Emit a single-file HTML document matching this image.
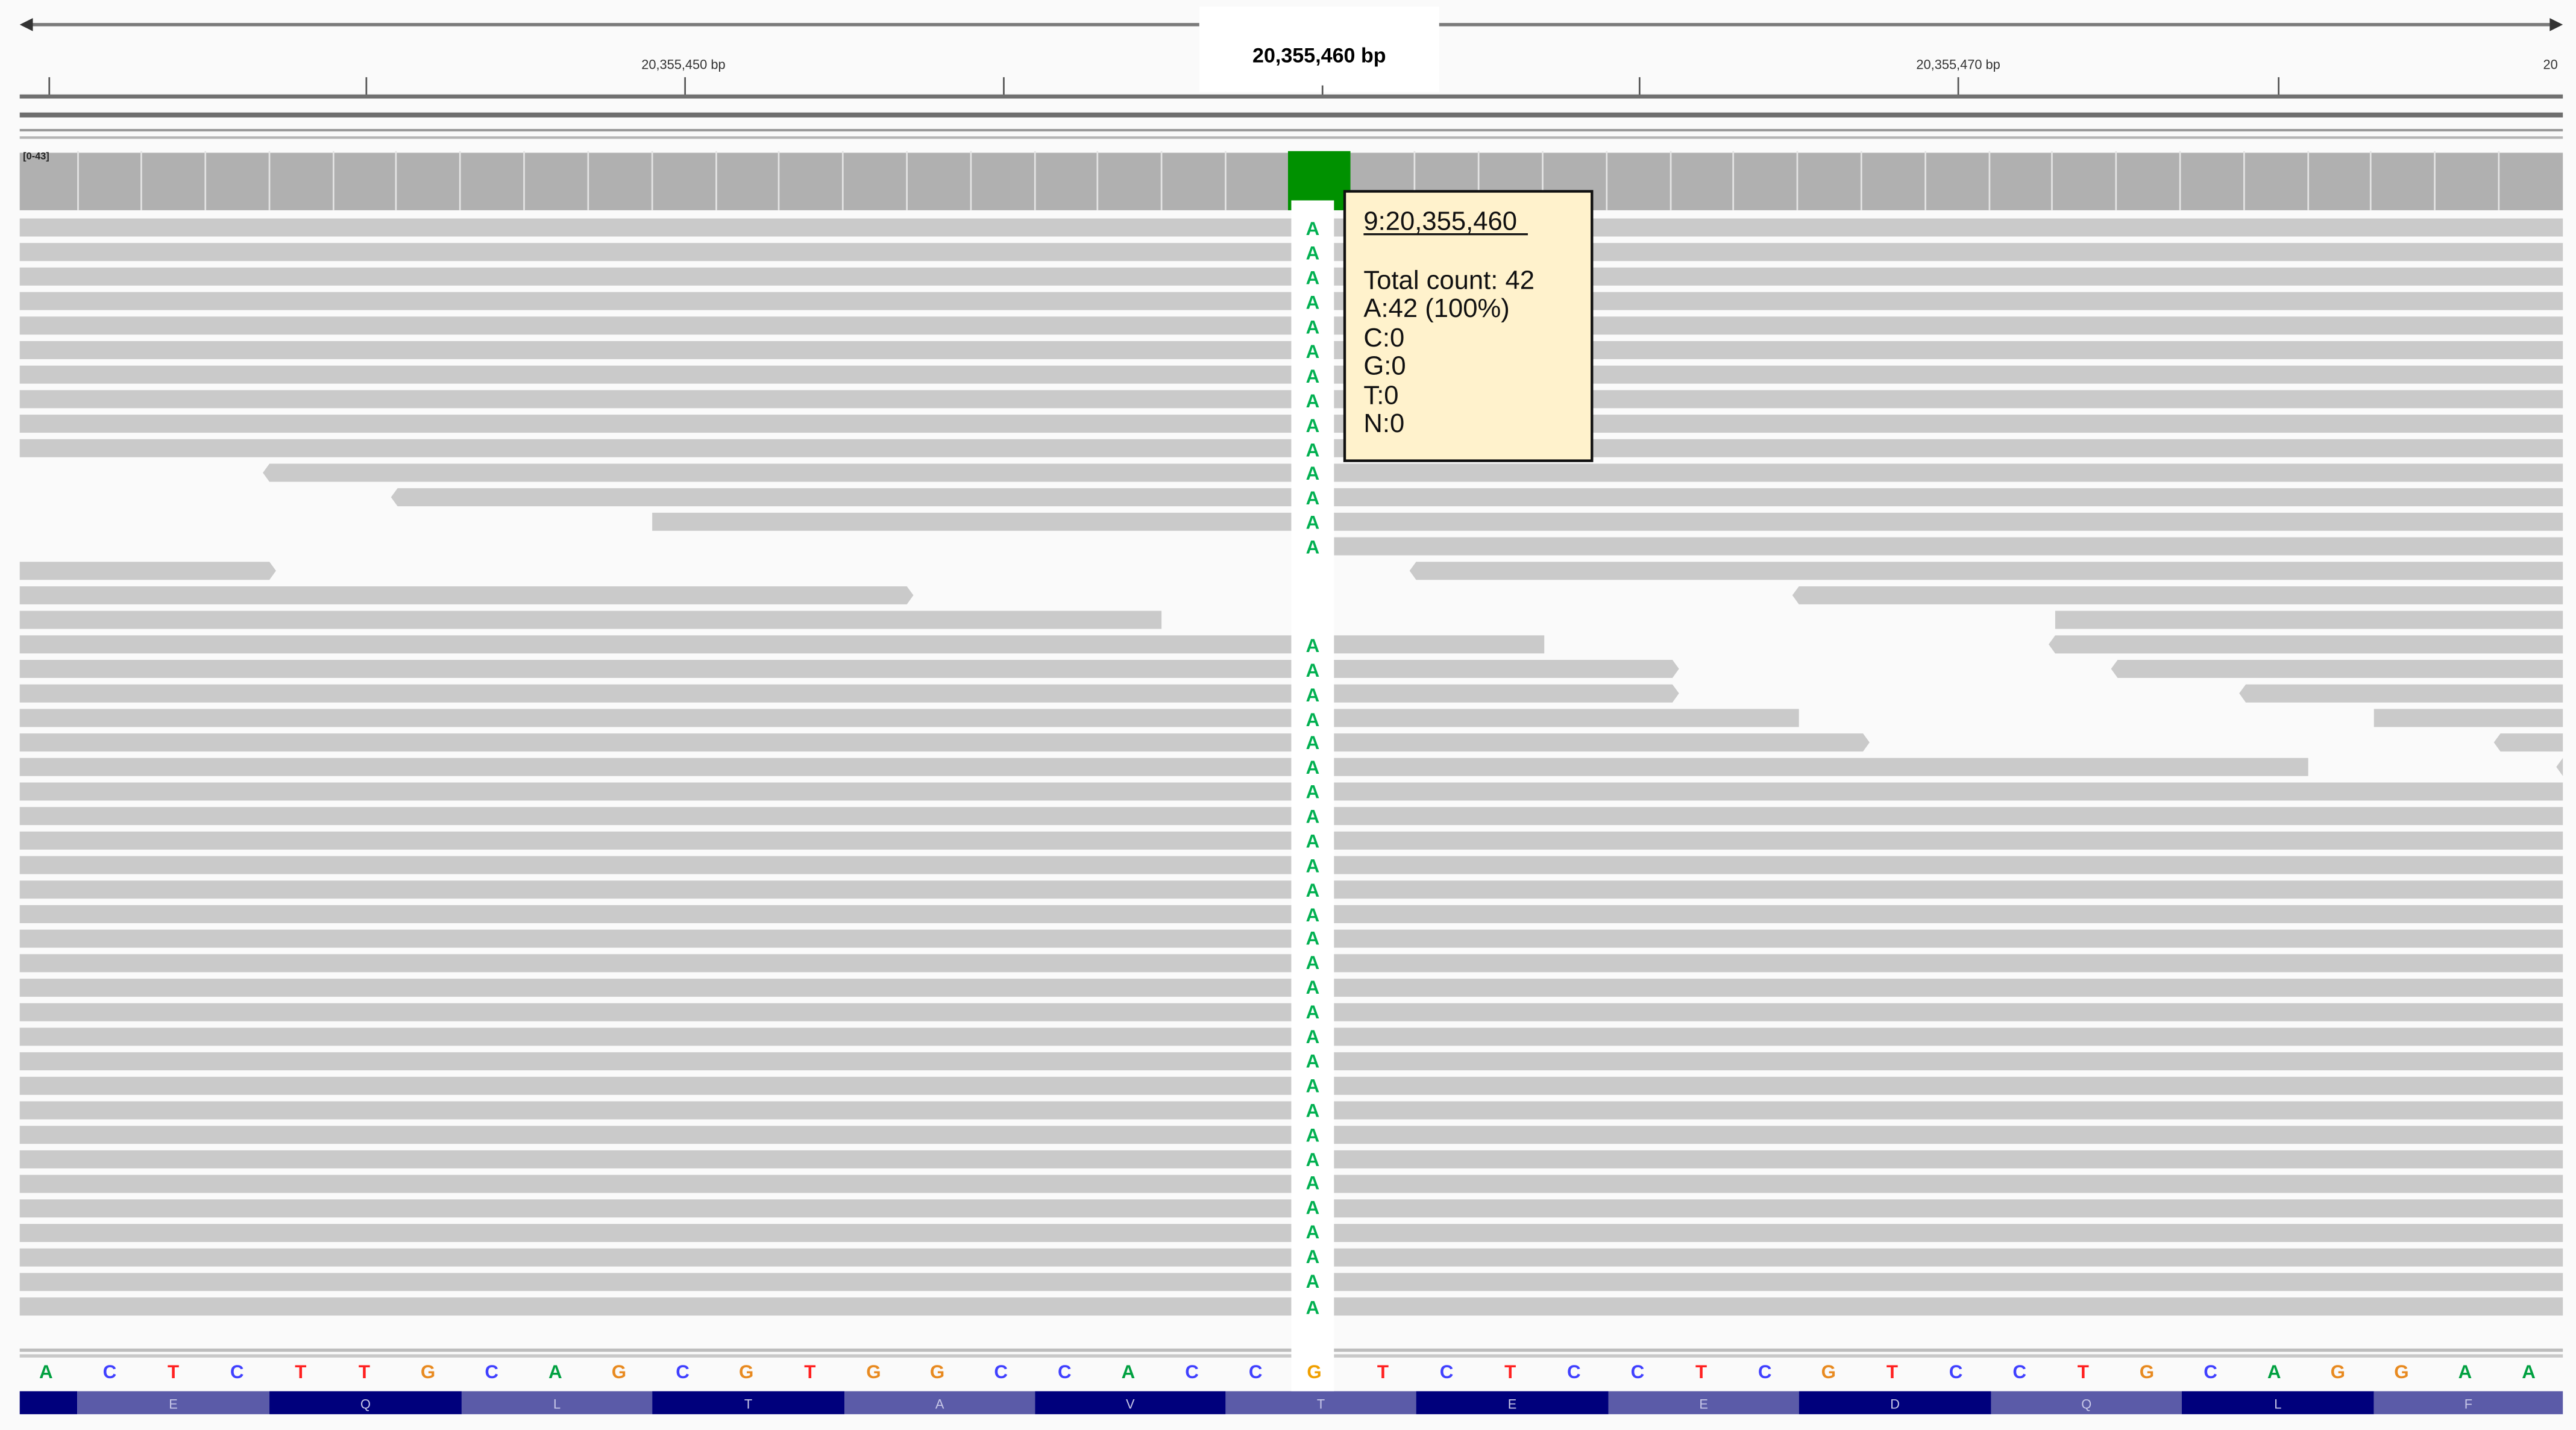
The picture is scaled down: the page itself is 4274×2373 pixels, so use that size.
<!DOCTYPE html>
<html><head><meta charset="utf-8"><style>
html,body{margin:0;padding:0;background:#fafafa;overflow:hidden}
svg{display:block}
text{font-family:"Liberation Sans",sans-serif}
</style></head><body>
<svg width="4274" height="2373" viewBox="0 0 1568 870.6" preserveAspectRatio="none" xmlns="http://www.w3.org/2000/svg">
<rect width="1568" height="871" fill="#fafafa"/>
<!-- top arrow line -->
<line x1="16" y1="15" x2="1552" y2="15" stroke="#7a7a7a" stroke-width="2"/>
<polygon points="12,15 20,11 20,19" fill="#333"/>
<polygon points="1560,15 1552,11 1552,19" fill="#333"/>
<rect x="730" y="4" width="146" height="52" fill="#fff"/>
<text x="803" y="38" font-size="12.5" font-weight="bold" text-anchor="middle" fill="#000">20,355,460 bp</text>
<text x="416" y="42" font-size="8" text-anchor="middle" fill="#333">20,355,450 bp</text>
<text x="1192" y="42" font-size="8" text-anchor="middle" fill="#333">20,355,470 bp</text>
<text x="1548" y="42" font-size="8" fill="#333">20</text>
<!-- ticks -->
<g stroke="#555" stroke-width="1">
<line x1="30" y1="47" x2="30" y2="58"/><line x1="223" y1="47" x2="223" y2="58"/><line x1="417" y1="47" x2="417" y2="58"/><line x1="611" y1="47" x2="611" y2="58"/><line x1="805" y1="52" x2="805" y2="58"/><line x1="998" y1="47" x2="998" y2="58"/><line x1="1192" y1="47" x2="1192" y2="58"/><line x1="1387" y1="47" x2="1387" y2="58"/>
</g>
<rect x="12" y="57.5" width="1548" height="2.5" fill="#707070"/>
<rect x="12" y="68.5" width="1548" height="3" fill="#6e6e6e"/>
<rect x="12" y="78.5" width="1548" height="1.5" fill="#9a9a9a"/>
<rect x="12" y="83" width="1548" height="1.5" fill="#b5b5b5"/>
<!-- coverage -->
<g fill="#b0b0b0">
<rect x="12" y="93" width="1548" height="35"/>
</g>
<g stroke="#e4e4e4" stroke-width="1">
<line x1="47.5" y1="92" x2="47.5" y2="128"/><line x1="86" y1="92" x2="86" y2="128"/><line x1="125" y1="92" x2="125" y2="128"/><line x1="164" y1="92" x2="164" y2="128"/><line x1="203" y1="92" x2="203" y2="128"/><line x1="241" y1="92" x2="241" y2="128"/><line x1="280" y1="92" x2="280" y2="128"/><line x1="319" y1="92" x2="319" y2="128"/><line x1="358" y1="92" x2="358" y2="128"/><line x1="397" y1="92" x2="397" y2="128"/><line x1="436" y1="92" x2="436" y2="128"/><line x1="474" y1="92" x2="474" y2="128"/><line x1="513" y1="92" x2="513" y2="128"/><line x1="552" y1="92" x2="552" y2="128"/><line x1="591" y1="92" x2="591" y2="128"/><line x1="630" y1="92" x2="630" y2="128"/><line x1="668" y1="92" x2="668" y2="128"/><line x1="707" y1="92" x2="707" y2="128"/><line x1="746" y1="92" x2="746" y2="128"/><line x1="861" y1="92" x2="861" y2="128"/><line x1="900" y1="92" x2="900" y2="128"/><line x1="939" y1="92" x2="939" y2="128"/><line x1="978" y1="92" x2="978" y2="128"/><line x1="1017" y1="92" x2="1017" y2="128"/><line x1="1055" y1="92" x2="1055" y2="128"/><line x1="1094" y1="92" x2="1094" y2="128"/><line x1="1133" y1="92" x2="1133" y2="128"/><line x1="1172" y1="92" x2="1172" y2="128"/><line x1="1211" y1="92" x2="1211" y2="128"/><line x1="1249" y1="92" x2="1249" y2="128"/><line x1="1288" y1="92" x2="1288" y2="128"/><line x1="1327" y1="92" x2="1327" y2="128"/><line x1="1366" y1="92" x2="1366" y2="128"/><line x1="1405" y1="92" x2="1405" y2="128"/><line x1="1443" y1="92" x2="1443" y2="128"/><line x1="1482" y1="92" x2="1482" y2="128"/><line x1="1521" y1="92" x2="1521" y2="128"/>
</g>
<rect x="784" y="92" width="38" height="36" fill="#009100"/>
<text x="14" y="97" font-size="6" font-weight="bold" fill="#222">[0-43]</text>
<!-- reads -->
<g fill="#cacaca" id="reads">
<!-- rows 0-9 full -->
<rect x="12" y="133" width="1548" height="11"/>
<rect x="12" y="147.93" width="1548" height="11"/>
<rect x="12" y="162.86" width="1548" height="11"/>
<rect x="12" y="177.79" width="1548" height="11"/>
<rect x="12" y="192.72" width="1548" height="11"/>
<rect x="12" y="207.65" width="1548" height="11"/>
<rect x="12" y="222.58" width="1548" height="11"/>
<rect x="12" y="237.51" width="1548" height="11"/>
<rect x="12" y="252.44" width="1548" height="11"/>
<rect x="12" y="267.37" width="1548" height="11"/>
<!-- row10 y=282.3 -->
<polygon points="160,287.8 164,282.3 1560,282.3 1560,293.3 164,293.3"/>
<!-- row11 y=297.23 -->
<polygon points="238,302.7 242,297.23 1560,297.23 1560,308.23 242,308.23"/>
<!-- row12 y=312.16 -->
<rect x="397" y="312.16" width="1163" height="11"/>
<!-- row13 y=327.09 -->
<rect x="812" y="327.09" width="748" height="11"/>
<!-- row14 y=342.02 -->
<polygon points="12,342.02 164,342.02 168,347.5 164,353.02 12,353.02"/>
<polygon points="858,347.5 862,342.02 1560,342.02 1560,353.02 862,353.02"/>
<!-- row15 y=356.95 -->
<polygon points="12,356.95 552,356.95 556,362.4 552,367.95 12,367.95"/>
<polygon points="1091,362.4 1095,356.95 1560,356.95 1560,367.95 1095,367.95"/>
<!-- row16 y=371.88 -->
<rect x="12" y="371.88" width="695" height="11"/>
<rect x="1251" y="371.88" width="309" height="11"/>
<!-- row17 y=386.81 -->
<rect x="12" y="386.81" width="928" height="11"/>
<polygon points="1247,392.3 1251,386.81 1560,386.81 1560,397.81 1251,397.81"/>
<!-- row18 y=401.74 -->
<polygon points="12,401.74 1018,401.74 1022,407.2 1018,412.74 12,412.74"/>
<polygon points="1285,407.2 1289,401.74 1560,401.74 1560,412.74 1289,412.74"/>
<!-- row19 y=416.67 -->
<polygon points="12,416.67 1018,416.67 1022,422.1 1018,427.67 12,427.67"/>
<polygon points="1363,422.1 1367,416.67 1560,416.67 1560,427.67 1367,427.67"/>
<!-- row20 y=431.6 -->
<rect x="12" y="431.6" width="1083" height="11"/>
<rect x="1445" y="431.6" width="115" height="11"/>
<!-- row21 y=446.53 -->
<polygon points="12,446.53 1134,446.53 1138,452 1134,457.53 12,457.53"/>
<polygon points="1518,452 1522,446.53 1560,446.53 1560,457.53 1522,457.53"/>
<!-- row22 y=461.46 -->
<rect x="12" y="461.46" width="1393" height="11"/>
<polygon points="1556,466.9 1560,461.46 1560,472.46"/>
<!-- rows 23-44 -->
<rect x="12" y="476.39" width="1548" height="11"/>
<rect x="12" y="491.32" width="1548" height="11"/>
<rect x="12" y="506.25" width="1548" height="11"/>
<rect x="12" y="521.18" width="1548" height="11"/>
<rect x="12" y="536.11" width="1548" height="11"/>
<rect x="12" y="551.04" width="1548" height="11"/>
<rect x="12" y="565.97" width="1548" height="11"/>
<rect x="12" y="580.9" width="1548" height="11"/>
<rect x="12" y="595.83" width="1548" height="11"/>
<rect x="12" y="610.76" width="1548" height="11"/>
<rect x="12" y="625.69" width="1548" height="11"/>
<rect x="12" y="640.62" width="1548" height="11"/>
<rect x="12" y="655.55" width="1548" height="11"/>
<rect x="12" y="670.48" width="1548" height="11"/>
<rect x="12" y="685.41" width="1548" height="11"/>
<rect x="12" y="700.34" width="1548" height="11"/>
<rect x="12" y="715.27" width="1548" height="11"/>
<rect x="12" y="730.2" width="1548" height="11"/>
<rect x="12" y="745.13" width="1548" height="11"/>
<rect x="12" y="760.06" width="1548" height="11"/>
<rect x="12" y="774.99" width="1548" height="11"/>
<rect x="12" y="789.92" width="1548" height="11"/>
</g>
<!-- bottom lines -->
<rect x="12" y="821" width="1548" height="2" fill="#bdbdbd"/>
<rect x="12" y="824.5" width="1548" height="2" fill="#c8c8c8"/>
<!-- white strip -->
<rect x="786" y="122" width="26" height="724" fill="#fff"/>
<!-- A letters -->
<g font-size="11.5" font-weight="bold" fill="#00b050" text-anchor="middle">
<text x="799" y="143">A</text><text x="799" y="158">A</text><text x="799" y="173">A</text><text x="799" y="188">A</text><text x="799" y="203">A</text><text x="799" y="218">A</text><text x="799" y="233">A</text><text x="799" y="248">A</text><text x="799" y="263">A</text><text x="799" y="278">A</text><text x="799" y="292">A</text><text x="799" y="307">A</text><text x="799" y="322">A</text><text x="799" y="337">A</text>
<text x="799" y="397">A</text><text x="799" y="412">A</text><text x="799" y="427">A</text><text x="799" y="442">A</text><text x="799" y="456">A</text><text x="799" y="471">A</text><text x="799" y="486">A</text><text x="799" y="501">A</text><text x="799" y="516">A</text><text x="799" y="531">A</text><text x="799" y="546">A</text><text x="799" y="561">A</text><text x="799" y="575">A</text><text x="799" y="590">A</text><text x="799" y="605">A</text><text x="799" y="620">A</text><text x="799" y="635">A</text><text x="799" y="650">A</text><text x="799" y="665">A</text><text x="799" y="680">A</text><text x="799" y="695">A</text><text x="799" y="710">A</text><text x="799" y="724">A</text><text x="799" y="739">A</text><text x="799" y="754">A</text><text x="799" y="769">A</text><text x="799" y="784">A</text><text x="799" y="800">A</text>
</g>
<!-- sequence -->
<g font-size="11.5" font-weight="bold" text-anchor="middle">
<text x="28" y="839" fill="#00a040">A</text><text x="66.75" y="839" fill="#4040ff">C</text><text x="105.5" y="839" fill="#ff2020">T</text><text x="144.25" y="839" fill="#4040ff">C</text><text x="183" y="839" fill="#ff2020">T</text><text x="221.75" y="839" fill="#ff2020">T</text><text x="260.5" y="839" fill="#e88a20">G</text><text x="299.25" y="839" fill="#4040ff">C</text><text x="338" y="839" fill="#00a040">A</text><text x="376.75" y="839" fill="#e88a20">G</text><text x="415.5" y="839" fill="#4040ff">C</text><text x="454.25" y="839" fill="#e88a20">G</text><text x="493" y="839" fill="#ff2020">T</text><text x="531.75" y="839" fill="#e88a20">G</text><text x="570.5" y="839" fill="#e88a20">G</text><text x="609.25" y="839" fill="#4040ff">C</text><text x="648" y="839" fill="#4040ff">C</text><text x="686.75" y="839" fill="#00a040">A</text><text x="725.5" y="839" fill="#4040ff">C</text><text x="764.25" y="839" fill="#4040ff">C</text>
<text x="800" y="839" fill="#f0a000">G</text>
<text x="841.75" y="839" fill="#ff2020">T</text><text x="880.5" y="839" fill="#4040ff">C</text><text x="919.25" y="839" fill="#ff2020">T</text><text x="958" y="839" fill="#4040ff">C</text><text x="996.75" y="839" fill="#4040ff">C</text><text x="1035.5" y="839" fill="#ff2020">T</text><text x="1074.25" y="839" fill="#4040ff">C</text><text x="1113" y="839" fill="#e88a20">G</text><text x="1151.75" y="839" fill="#ff2020">T</text><text x="1190.5" y="839" fill="#4040ff">C</text><text x="1229.25" y="839" fill="#4040ff">C</text><text x="1268" y="839" fill="#ff2020">T</text><text x="1306.75" y="839" fill="#e88a20">G</text><text x="1345.5" y="839" fill="#4040ff">C</text><text x="1384.25" y="839" fill="#00a040">A</text><text x="1423" y="839" fill="#e88a20">G</text><text x="1461.75" y="839" fill="#e88a20">G</text><text x="1500.5" y="839" fill="#00a040">A</text><text x="1539.25" y="839" fill="#00a040">A</text>
</g>
<!-- amino acids -->
<g>
<rect x="12" y="847" width="35" height="14" fill="#00007c"/>
<rect x="47" y="847" width="117" height="14" fill="#5b5ba8"/>
<rect x="164" y="847" width="117" height="14" fill="#00007c"/>
<rect x="281" y="847" width="116" height="14" fill="#5b5ba8"/>
<rect x="397" y="847" width="117" height="14" fill="#00007c"/>
<rect x="514" y="847" width="116" height="14" fill="#5b5ba8"/>
<rect x="630" y="847" width="116" height="14" fill="#00007c"/>
<rect x="746" y="847" width="116" height="14" fill="#5b5ba8"/>
<rect x="862" y="847" width="117" height="14" fill="#00007c"/>
<rect x="979" y="847" width="116" height="14" fill="#5b5ba8"/>
<rect x="1095" y="847" width="117" height="14" fill="#00007c"/>
<rect x="1212" y="847" width="116" height="14" fill="#5b5ba8"/>
<rect x="1328" y="847" width="117" height="14" fill="#00007c"/>
<rect x="1445" y="847" width="115" height="14" fill="#5b5ba8"/>
</g>
<rect x="786" y="845" width="26" height="2" fill="#fff"/>
<g font-size="8" fill="#c8c8e8" text-anchor="middle">
<text x="105.5" y="857.5">E</text><text x="222.5" y="857.5">Q</text><text x="339" y="857.5">L</text><text x="455.5" y="857.5">T</text><text x="572" y="857.5">A</text><text x="688" y="857.5">V</text><text x="804" y="857.5">T</text><text x="920.5" y="857.5">E</text><text x="1037" y="857.5">E</text><text x="1153.5" y="857.5">D</text><text x="1270" y="857.5">Q</text><text x="1386.5" y="857.5">L</text><text x="1502.5" y="857.5">F</text>
</g>
<!-- tooltip -->
<rect x="818.5" y="116.5" width="150.5" height="164" fill="#fff2cc" stroke="#111" stroke-width="1.6"/>
<g font-size="16" fill="#111">
<text x="830" y="140">9:20,355,460</text>
<rect x="830" y="142" width="100" height="1.2" fill="#111"/>
<text x="830" y="176">Total count: 42</text>
<text x="830" y="193">A:42 (100%)</text>
<text x="830" y="211">C:0</text>
<text x="830" y="228">G:0</text>
<text x="830" y="246">T:0</text>
<text x="830" y="263">N:0</text>
</g>
</svg>
</body></html>
